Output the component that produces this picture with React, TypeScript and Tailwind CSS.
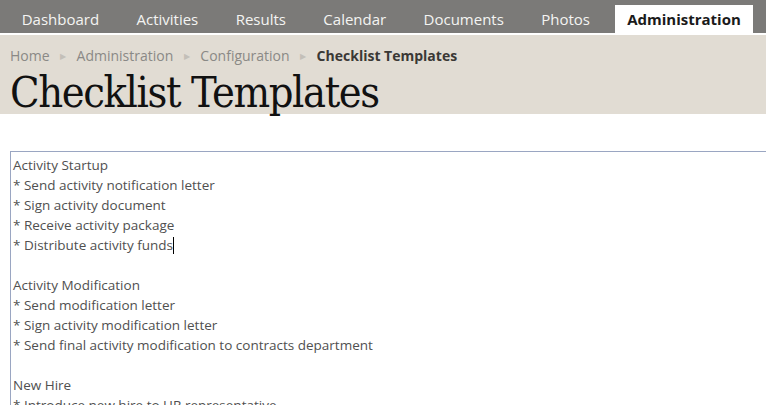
import React from 'react';

const navItems = ['Dashboard', 'Activities', 'Results', 'Calendar', 'Documents', 'Photos'];
const crumbs = ['Home', 'Administration', 'Configuration'];

const lines = [
  'Activity Startup',
  '* Send activity notification letter',
  '* Sign activity document',
  '* Receive activity package',
  '* Distribute activity funds',
  '',
  'Activity Modification',
  '* Send modification letter',
  '* Sign activity modification letter',
  '* Send final activity modification to contracts department',
  '',
  'New Hire',
  '* Introduce new hire to HR representative',
  '* Complete onboarding paperwork',
];

const sans = { fontFamily: '"Open Sans", "Noto Sans", sans-serif' };

export default function App() {
  return (
    <div className="w-[766px] h-[405px] overflow-hidden bg-white" style={sans}>
      {/* top nav */}
      <div className="h-[35px] bg-[#7b7a78] border-b-2 border-white flex items-end pl-[3px]">
        {navItems.map((item) => (
          <div key={item} className="px-[18.7px] h-[28px] flex items-center text-[15px] text-[#f4f4f2]">
            {item}
          </div>
        ))}
        <div className="ml-[6px] px-[12.5px] h-[28px] flex items-center bg-white text-[15px] font-bold text-[#1a1a1a]">
          Administration
        </div>
      </div>

      {/* header */}
      <div className="bg-[#e1dcd3] h-[79px] pl-[10px]">
        <div className="flex items-center h-[40px] pt-[1px] text-[14px] text-[#8a8986]">
          {crumbs.map((c) => (
            <React.Fragment key={c}>
              <span>{c}</span>
              <span className="mx-[10.5px] text-[8px] text-[#c3bfb8]">▶</span>
            </React.Fragment>
          ))}
          <span className="font-bold text-[#3a3835]">Checklist Templates</span>
        </div>
        <h1
          className="text-[43px] leading-[35px] text-[#111] tracking-[-1.4px]"
          style={{ fontFamily: '"DejaVu Serif Condensed", "DejaVu Serif", serif' }}
        >
          Checklist Templates
        </h1>
      </div>

      {/* textarea */}
      <div className="pt-[37px] pl-[10px]">
        <div className="w-[800px] h-[300px] border border-[#9aa6c2] border-r-0 px-[2px] pt-[3px] text-[13.5px] leading-[20px] text-[#505050]">
          {lines.map((l, i) => (
            <div key={i} className="h-[20px] whitespace-pre">
              {l}
              {i === 4 && <span className="inline-block w-px h-[17px] bg-black align-[-4px]" />}
            </div>
          ))}
        </div>
      </div>
    </div>
  );
}
